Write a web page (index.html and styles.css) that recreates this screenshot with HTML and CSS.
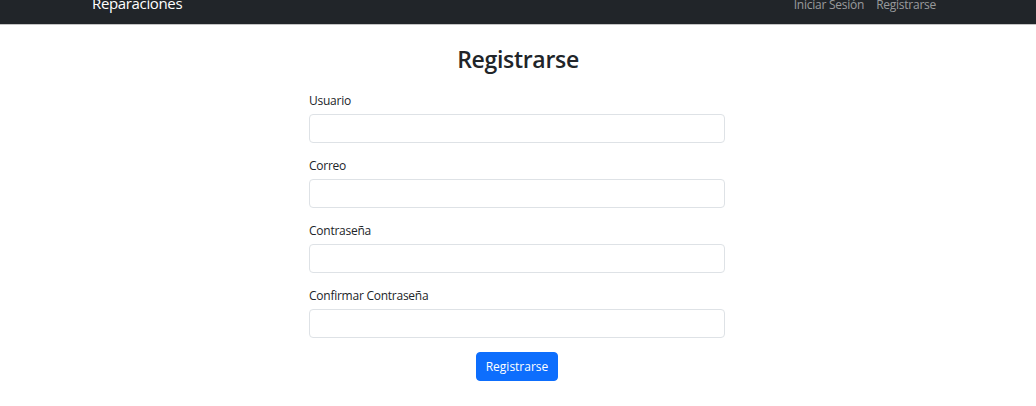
FILE: index.html
```html
<!DOCTYPE html>
<html lang="es">
<head>
<meta charset="utf-8">
<title>Registrarse</title>
<link rel="stylesheet" href="styles.css">
</head>
<body>
<nav class="navbar">
  <div class="container nav-inner">
    <a class="brand" href="#">Reparaciones</a>
    <ul class="nav-links">
      <li><a href="#">Iniciar Sesión</a></li>
      <li><a href="#">Registrarse</a></li>
    </ul>
  </div>
</nav>
<main class="container">
  <h2 class="title">Registrarse</h2>
  <form class="form">
    <div class="field">
      <label for="u">Usuario</label>
      <input id="u" type="text">
    </div>
    <div class="field">
      <label for="c">Correo</label>
      <input id="c" type="email">
    </div>
    <div class="field">
      <label for="p">Contraseña</label>
      <input id="p" type="password">
    </div>
    <div class="field">
      <label for="p2">Confirmar Contraseña</label>
      <input id="p2" type="password">
    </div>
    <div class="actions">
      <button type="submit" class="btn">Registrarse</button>
    </div>
  </form>
</main>
</body>
</html>
```
FILE: styles.css
```css
* { box-sizing: border-box; }
html, body { margin: 0; padding: 0; }
body {
  font-family: "Open Sans", "Noto Sans", sans-serif;
  font-size: 12px;
  letter-spacing: -0.25px;
  color: #212529;
  background: #fff;
}
.container {
  width: 866px;
  margin: 0 auto;
  padding: 0 9px;
}
.navbar {
  background: #212529;
  height: 25px;
  overflow: hidden;
  border-bottom: 1px solid #c4c4c4;
}
.nav-inner {
  display: flex;
  justify-content: space-between;
  align-items: flex-end;
  height: 24px;
  padding-bottom: 13px;
}
.brand {
  color: #fff;
  text-decoration: none;
  font-size: 15px;
  line-height: 15px;
  letter-spacing: -0.35px;
  margin-left: -2px;
}
.nav-links {
  list-style: none;
  margin: 0;
  padding: 0;
  display: flex;
}
.nav-links a {
  display: block;
  color: rgba(255,255,255,.55);
  text-decoration: none;
  font-size: 12px;
  line-height: 12px;
  padding: 0 6px;
}
.title {
  text-align: center;
  font-size: 23px;
  font-weight: 600;
  letter-spacing: -0.3px;
  margin: 20px 0 0;
  line-height: 29px;
}
.form {
  width: 416px;
  margin: 14px auto 0;
  position: relative;
  left: -1px;
}
.field { margin-bottom: 10px; }
.field label {
  display: block;
  line-height: 18px;
  padding-top: 4px;
  margin-bottom: 4px;
}
.field input {
  display: block;
  width: 100%;
  height: 29px;
  border: 1px solid #dee2e6;
  border-radius: 4px;
  font: inherit;
  padding: 0 9px;
}
.actions {
  display: flex;
  justify-content: center;
  padding-top: 4px;
}
.btn {
  background: #0d6efd;
  color: #fff;
  border: 1px solid #0d6efd;
  border-radius: 4px;
  font: inherit;
  height: 29px;
  padding: 0 9px;
}
```
